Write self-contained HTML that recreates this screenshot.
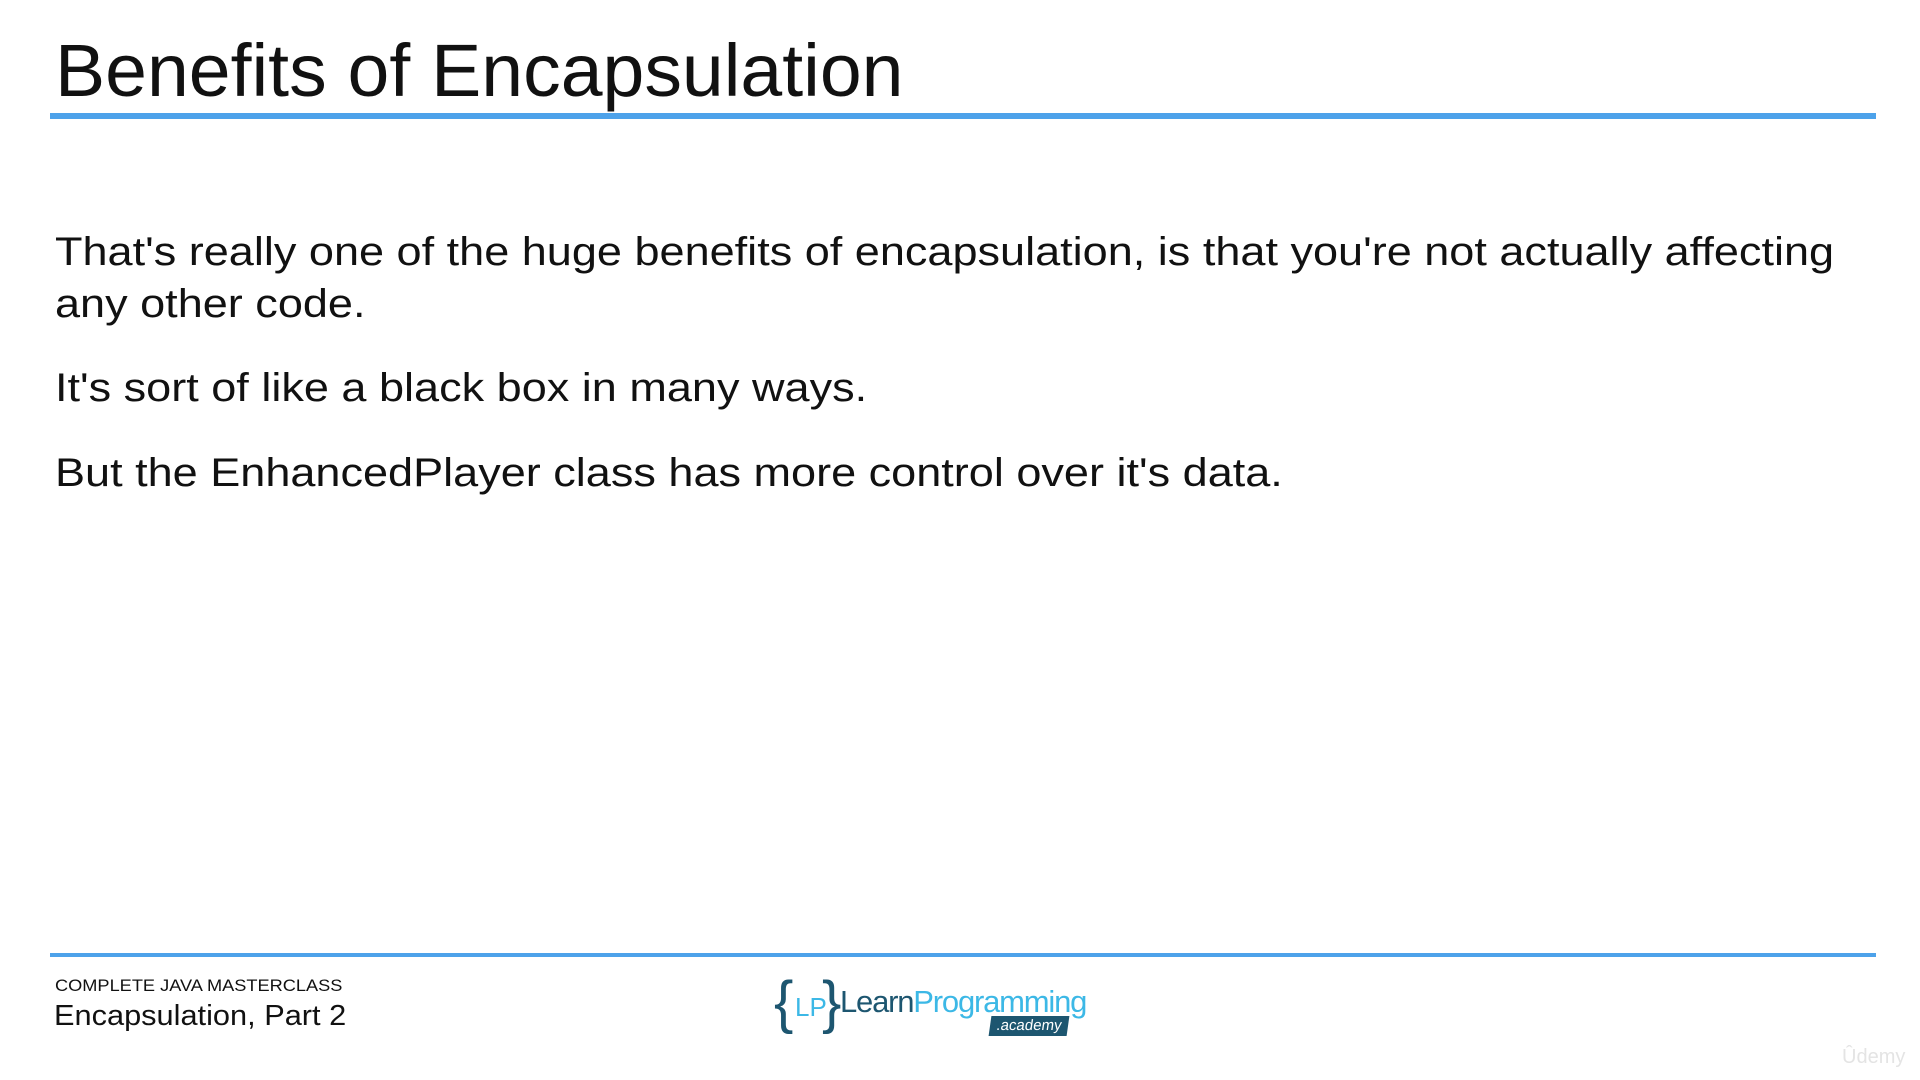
<!DOCTYPE html>
<html><head><meta charset="utf-8"><style>
html,body{margin:0;padding:0;background:#fff;width:1920px;height:1080px;overflow:hidden;font-family:"Liberation Sans",sans-serif;color:#111}
.a{position:absolute;white-space:nowrap;transform-origin:0 50%}
.t{left:55px;top:26px;font-size:74px;line-height:90px;transform:scaleX(1.016)}
.bar{position:absolute;left:50px;width:1826px;background:#4da2ea}
.b{left:55px;font-size:40px;line-height:50px;transform:scaleX(1.126)}
</style></head><body>
<div class="a t">Benefits of Encapsulation</div>
<div class="bar" style="top:113px;height:6px"></div>
<div class="a b" style="top:227px">That's really one of the huge benefits of encapsulation, is that you're not actually affecting</div>
<div class="a b" style="top:279px">any other code.</div>
<div class="a b" style="top:363px">It's sort of like a black box in many ways.</div>
<div class="a b" style="top:448px">But the EnhancedPlayer class has more control over it's data.</div>
<div class="bar" style="top:953px;height:4px"></div>
<div class="a" style="left:55px;top:976px;font-size:17px;line-height:20px;transform:scaleX(1.07)">COMPLETE JAVA MASTERCLASS</div>
<div class="a" style="left:54px;top:999px;font-size:29px;line-height:34px;transform:scaleX(1.06)">Encapsulation, Part 2</div>
<div class="a" style="left:774px;top:972px;font-size:58px;line-height:62px;color:#1d5670">{</div>
<div class="a" style="left:795px;top:992px;font-size:26px;line-height:30px;color:#3cb8e6">LP</div>
<div class="a" style="left:822px;top:972px;font-size:58px;line-height:62px;color:#1d5670">}</div>
<div class="a" style="left:840px;top:984px;font-size:31px;line-height:36px;letter-spacing:-1.2px"><span style="color:#1d5670">Learn</span><span style="color:#3cb8e6">Programming</span></div>
<div class="a" style="left:990px;top:1016px;width:78px;height:20px;background:#1d5670;color:#fff;font-size:15px;line-height:20px;text-align:center;transform:skewX(-8deg)">.academy</div>
<div class="a" style="left:1842px;top:1046px;font-size:20px;color:#e4e4e4">Ûdemy</div>
</body></html>
